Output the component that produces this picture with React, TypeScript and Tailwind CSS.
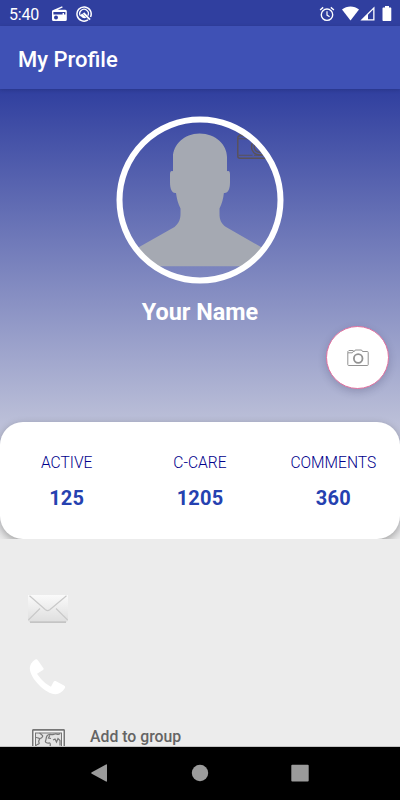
const stats = [
  { label: "ACTIVE", value: "125" },
  { label: "C-CARE", value: "1205" },
  { label: "COMMENTS", value: "360" },
];

function StatusBar() {
  return (
    <div className="flex h-[26px] shrink-0 items-center bg-[#303f9f] pl-[9px] pr-2 text-white">
      <span className="mt-1 w-[43px] text-[16px] leading-none tracking-[-0.2px]">5:40</span>
      {/* Radio */}
      <svg className="mt-px h-4 w-4" viewBox="0 0 16 16">
        <path
          fill="currentColor"
          fillRule="evenodd"
          d="M1.3 4.1 10.1.2l.6 1.3-5 2.3h7.6a1.5 1.5 0 0 1 1.5 1.5v8.2a1.5 1.5 0 0 1-1.5 1.5H1.5A1.5 1.5 0 0 1 0 13.5V5.3c0-.6.6-1 1.3-1.2ZM1.400 6v2.400h9.200V7H12v1.400h1.400V6ZM4 9.400a2 2 0 1 0 0 4 2 2 0 0 0 0-4Z"
        />
      </svg>
      {/* Circled badge */}
      <svg className="ml-2 mt-px h-4 w-4" viewBox="0 0 16 16" fill="none" stroke="currentColor">
        <path d="M12 13.900A7.100 7.100 0 1 1 14.500 11" strokeWidth="1.500" />
        <path d="M11.800 9.800A4.300 4.300 0 1 0 4.600 10.200" strokeWidth="1.300" />
        <path d="M7.500 7 14 13.600" strokeWidth="1.900" />
        <path fill="currentColor" stroke="none" d="M4.400 9.200 6.200 7.600l4.200 4.100c-2 1-4.800.4-6-2.500Z" />
      </svg>
      {/* Alarm */}
      <svg className="ml-auto mt-px h-4 w-4" viewBox="0 0 16 16" fill="none" stroke="currentColor">
        <circle cx="8" cy="8.700" r="5.700" strokeWidth="1.400" />
        <path d="M8 5.300v3.800l2.600 1.600" strokeWidth="1.200" />
        <path d="M1.100 4 4.200 1.400M14.900 4l-3.100-2.600" strokeWidth="1.400" />
      </svg>
      <svg className="ml-[7px] h-[15px] w-[17px]" viewBox="0 0 17 15">
        <path fill="currentColor" d="M0 3.500C4.800-.4 12.200-.4 17 3.500L8.500 14.600Z" />
      </svg>
      <svg className="ml-[1px] h-[15px] w-[15px]" viewBox="0 0 15 15">
        <path fill="currentColor" fillRule="evenodd" d="M14.500.400v14.200H.400ZM13.200 3.600 8 8.800v4.500h5.200Z" />
      </svg>
      <svg className="ml-[7px] h-[15px] w-[10px]" viewBox="0 0 10 15">
        <path
          fill="currentColor"
          d="M3 0h4v1.500h1.300c.6 0 1 .4 1 1V14c0 .6-.4 1-1 1H1.500c-.6 0-1-.4-1-1V2.500c0-.6.4-1 1-1H3Z"
        />
      </svg>
    </div>
  );
}

function Avatar() {
  return (
    <svg className="h-[168px] w-[168px]" viewBox="116 116 168 168">
      <defs>
        <clipPath id="avatar">
          <circle cx="200" cy="200" r="79" />
        </clipPath>
      </defs>
      <g clipPath="url(#avatar)" fill="none" stroke="#5a5258" strokeWidth="1.400">
        <path d="M270 158.300h-30c-1.500 0-2.200-.7-2.200-2V138c0-1.500.7-2.200 2-2.200h12" />
        <path d="M268 155.200h-14M252.500 155.200h-14M238 138.700h11M240 135v-1.200h6" strokeWidth="1.100" />
        <circle cx="259.500" cy="147" r="8" />
        <circle cx="259.500" cy="147" r="5.300" />
      </g>
      <path
        clipPath="url(#avatar)"
        fill="#a5a9b2"
        d="M199.500 133.500C184 133.500 173 145 173 157v14.300c-2-.7-3 .2-3 3.200v8c0 6 1.800 10.500 5.200 10.500h.8c.7 5.500 2 10.500 4.500 15.500v5c0 6-1.500 9.500-6 13.500L125 255v11.300h150V255l-49-28c-5-3.500-6.500-7.500-6.500-13.500v-5c2.500-5 3.800-10 4.400-15.500h.8c3.600 0 5.300-4.500 5.300-10.500v-8c0-3-.8-3.900-3-3.200V157c0-12-11-23.500-27.500-23.500Z"
      />
      <circle cx="200" cy="200" r="80.500" fill="none" stroke="#fff" strokeWidth="6" />
    </svg>
  );
}

function CameraButton() {
  return (
    <button
      aria-label="Change photo"
      className="mr-[11px] flex h-[63px] w-[63px] items-center justify-center self-end rounded-full border border-[#e2709f] bg-white shadow-[0_3px_8px_rgba(20,20,60,0.2)]"
    >
      <svg className="h-[18px] w-[22px]" viewBox="0 0 22 18" fill="none" stroke="#929292">
        <path d="M.800 3.500V15.700c0 .5.300.8.800.8h18.800c.5 0 .8-.3.800-.8V3.300c0-.5-.3-.8-.8-.8h-4.900L14.600 1H8.200l-.9 1.500H6.200V1.500H1.900L.800 2.600ZM.800 3.800h4.500l1-1.200" />
        <circle cx="11.200" cy="9.500" r="4.300" strokeWidth="1.800" />
      </svg>
    </button>
  );
}

function StatsCard() {
  return (
    <div className="grid h-[117px] shrink-0 grid-cols-3 rounded-[23px] bg-white pt-8 text-center shadow-[0_3px_8px_rgba(0,0,0,0.32)]">
      {stats.map((stat) => (
        <div key={stat.label} className="flex flex-col">
          <span className="text-[15.6px] font-light leading-[18px] text-[#00008b]">{stat.label}</span>
          <span className="mt-[14px] text-[20px] font-bold leading-6 tracking-[0.2px] text-[#2541b0]">{stat.value}</span>
        </div>
      ))}
    </div>
  );
}

function ContactList() {
  return (
    <div className="h-[208px] shrink-0 overflow-hidden border-b border-[#c4c4c4] bg-[#ececec] pt-14">
      {/* Mail */}
      <svg className="ml-7 h-7 w-10" viewBox="0 0 40 28">
        <defs>
          <linearGradient id="mail" x1="0" y1="0" x2="0" y2="1">
            <stop offset="0" stopColor="#fafafa" />
            <stop offset="1" stopColor="#dedede" />
          </linearGradient>
        </defs>
        <path fill="url(#mail)" d="M0 0h40v25.500l-2 2H2l-2-2Z" />
        <g fill="none" stroke="#c9c9c9" strokeWidth="1.200">
          <path d="M1.500.800 17.500 14.800c1.300 1 3 1 4.300 0L38.500.800" />
          <path d="M.300 25 12 13.500M39.700 25 28 13.500" />
          <path stroke="#b9b9b9" d="M2 27.200h36" />
        </g>
      </svg>
      {/* Phone */}
      <svg className="ml-[29px] mt-9 h-9 w-[37px]" viewBox="0 0 37 36">
        <path
          fill="#fff"
          d="M5.500.900c1.200-.8 2.300-1 3.200.1l5.600 8c.6.800.4 1.500-.3 2l-6 3.800c3 4.700 8.500 10.200 14 13l2.600-5c.4-.8 1.200-1.200 2-.7l8.400 4.300c1.200.6 1.500 1.800.8 2.800-2.300 3.500-5.500 6-9.300 6C16.500 35.200 1.200 19.500.800 9.500.700 6 2.500 3 5.500.900Z"
        />
      </svg>
      <div className="ml-8 mt-8 flex items-start">
        {/* Framed map */}
        <svg className="mt-[2px] h-8 w-[33px] shrink-0" viewBox="0 0 33 32" fill="none" stroke="#777">
          <rect x=".7" y=".9" width="31.600" height="30" rx=".8" strokeWidth="1.600" fill="#f4f4f4" />
          <rect x="3.500" y="4" width="26" height="24" fill="#e4e4e4" />
          <path
            strokeWidth="1.200"
            d="M4 8.500c2-.2 2.500 1.200 4 1 2-.3 3.500-2.500 2-3.500-1-.8-1.500-1.500-2.500-2M8 9.500c-1 2-2 2.500-1 4s-1.500 1.500-3 3M28 4.500c-2 2-3 0-5 .5s-2.500 1-4 .5-4 .5-4.500 2.500-.5 2.500-1 4 2 2.500 3.500 2 1.500 2 1 3.500M18 6l-1.500 3 2.500.5M21 11l2-1 1.500 3 1.500-3.500 2 2v5"
          />
        </svg>
        <span className="ml-[25px] text-[15.8px] font-medium leading-[19px] text-[#646464]">Add to group</span>
      </div>
    </div>
  );
}

function NavigationBar() {
  return (
    <div className="flex h-[53px] shrink-0 items-center justify-center bg-black pb-px">
      <svg className="h-5 w-[218px]" viewBox="0 0 218 20" fill="#9b9b9b">
        <path d="M16 2v16c0 .6-.4.900-1 .600L.800 10.800c-.7-.4-.7-1.200 0-1.600L15 1.400c.6-.3 1 0 1 .6Z" />
        <circle cx="109" cy="10" r="8.200" />
        <rect x="200.300" y="1.700" width="17.400" height="16.700" rx="1" />
      </svg>
    </div>
  );
}

export default function App() {
  return (
    <div className="flex h-[800px] w-[400px] flex-col overflow-hidden font-['Roboto',sans-serif]">
      <StatusBar />
      <header className="z-10 flex h-[63px] shrink-0 items-center bg-[#3f51b5] pl-[18px] pt-1 shadow-[0_1px_4px_rgba(0,0,0,0.15)]">
        <h1 className="text-[22px] font-medium leading-7 text-white">My Profile</h1>
      </header>
      <section className="flex h-[450px] shrink-0 flex-col overflow-hidden bg-linear-to-b/srgb from-[#303f9f] to-[#ececec]">
        <div className="flex h-[333px] shrink-0 flex-col items-center pt-[27px]">
          <Avatar />
          <h2 className="mt-[13px] text-[23.4px] font-bold leading-[30px] text-white">Your Name</h2>
          <div className="-mt-px flex flex-col self-stretch">
            <CameraButton />
          </div>
        </div>
        <StatsCard />
      </section>
      <ContactList />
      <NavigationBar />
    </div>
  );
}
